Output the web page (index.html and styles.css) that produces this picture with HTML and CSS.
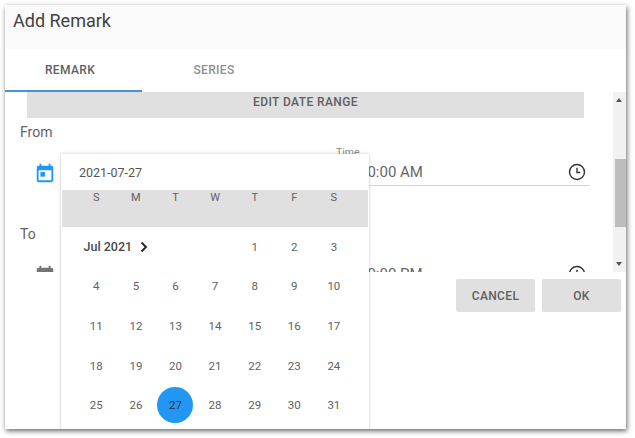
FILE: index.html
```html
<!DOCTYPE html>
<html lang="en">
  <head>
    <meta charset="UTF-8" />
    <title>Add Remark</title>
    <link rel="stylesheet" href="styles.css">
  </head>
  <body>
    <div class="dialog">
      <div class="dialog-title">Add Remark</div>

      <div class="tabs">
        <div class="tab active">REMARK</div>
        <div class="tab">SERIES</div>
      </div>

      <div class="scroll-area">
        <div class="form-content">
          <div class="range-bar">EDIT DATE RANGE</div>

          <div class="group-label">From</div>
          <div class="field-row">
            <svg class="date-icon blue" viewBox="0 0 24 24"><path d="M19 4h-1V2h-2v2H8V2H6v2H5C3.9 4 3 4.900 3 6v14c0 1.100.9 2 2 2h14c1.100 0 2-.9 2-2V6c0-1.100-.9-2-2-2zm0 16H5V9h14v11z" /><rect x="7" y="11" width="5" height="5" /></svg>
            <div class="time-field">
              <span class="time-label">Time</span>
              <span class="time-value">10:00 AM</span>
              <svg class="clock-icon" viewBox="0 0 24 24"><circle cx="12" cy="12" r="9" /><path d="M12 7v5.500h4" /></svg>
            </div>
          </div>

          <div class="group-label to">To</div>
          <div class="field-row">
            <svg class="date-icon" viewBox="0 0 24 24"><path d="M19 4h-1V2h-2v2H8V2H6v2H5C3.9 4 3 4.900 3 6v14c0 1.100.9 2 2 2h14c1.100 0 2-.9 2-2V6c0-1.100-.9-2-2-2zm0 16H5V9h14v11z" /></svg>
            <div class="time-field">
              <span class="time-value">10:00 PM</span>
              <svg class="clock-icon" viewBox="0 0 24 24"><circle cx="12" cy="12" r="9" /><path d="M12 7v5.500h4" /></svg>
            </div>
          </div>
        </div>

        <div class="scrollbar">
          <span class="arrow up"></span>
          <span class="thumb"></span>
          <span class="arrow down"></span>
        </div>
      </div>

      <div class="actions">
        <button class="btn">CANCEL</button>
        <button class="btn">OK</button>
      </div>

      <!-- Date picker popup sits over the form -->
      <div class="picker">
        <div class="picker-input">2021-07-27</div>
        <div class="weekdays">
          <span>S</span><span>M</span><span>T</span><span>W</span><span>T</span><span>F</span><span>S</span>
        </div>
        <div class="days">
          <div class="month">Jul 2021
            <svg class="chevron" viewBox="0 0 10 12"><path d="M2.500 1.500 7 6l-4.500 4.500" /></svg>
          </div>
          <span>1</span><span>2</span><span>3</span>
          <span>4</span><span>5</span><span>6</span><span>7</span><span>8</span><span>9</span><span>10</span>
          <span>11</span><span>12</span><span>13</span><span>14</span><span>15</span><span>16</span><span>17</span>
          <span>18</span><span>19</span><span>20</span><span>21</span><span>22</span><span>23</span><span>24</span>
          <span>25</span><span>26</span><span class="selected">27</span><span>28</span><span>29</span><span>30</span><span>31</span>
        </div>
      </div>
    </div>
  </body>
</html>
```

FILE: styles.css
```css
/* General Body Styles */
body {
  margin: 0;
  width: 635px;
  height: 438px;
  overflow: hidden;
  background: #fff;
  font-family: "Roboto", "Liberation Sans", sans-serif;
  color: #424242;
}

/* Dialog */
.dialog {
  position: relative;
  box-sizing: border-box;
  width: 621px;
  height: 424px;
  margin: 5px 0 0 5px;
  background: #fff;
  overflow: hidden;
}

body::after {
  content: "";
  position: absolute;
  top: 5px;
  left: 5px;
  width: 621px;
  height: 424px;
  box-shadow: 1px 2px 5px rgba(0, 0, 0, 0.6);
  pointer-events: none;
}

.dialog-title {
  height: 44px;
  padding-left: 8px;
  background: #fafafa;
  font-size: 18px;
  line-height: 31px;
  color: #424242;
}

/* Tabs */
.tabs {
  display: flex;
  height: 43px;
}

.tab {
  width: 144px;
  box-sizing: border-box;
  text-align: center;
  font-size: 12px;
  font-weight: 500;
  letter-spacing: 0.35px;
  line-height: 43px;
  color: #909090;
}

.tab.active {
  width: 137px;
  padding-right: 7px;
  color: #5f5f5f;
  border-bottom: 2px solid #4a90d9;
}

/* Scrolling form area */
.scroll-area {
  display: flex;
  height: 180px;
  overflow: hidden;
}

.form-content {
  flex: 1;
  height: 180px;
  overflow: hidden;
}

.range-bar {
  width: 557px;
  height: 26px;
  margin-left: 22px;
  background: #e0e0e0;
  text-align: center;
  font-size: 12px;
  font-weight: 500;
  letter-spacing: 0.4px;
  line-height: 20px;
  color: #5f5f5f;
}

.group-label {
  margin: 6px 0 0 15px;
  height: 16px;
  font-size: 14px;
  line-height: 16px;
  color: #616161;
}

.group-label.to {
  margin-top: 40px;
}

.field-row {
  display: flex;
  align-items: flex-end;
  height: 46px;
}

.date-icon {
  width: 22px;
  height: 22px;
  margin: 0 0 2px 29px;
  fill: #757575;
  flex: none;
}

.date-icon.blue {
  fill: #2196f3;
}

.time-field {
  display: flex;
  align-items: center;
  position: relative;
  box-sizing: border-box;
  width: 254px;
  height: 27px;
  margin-left: 280px;
  padding-right: 3px;
  border-bottom: 1px solid #d6d6d6;
}

.time-label {
  position: absolute;
  left: 0;
  top: -13px;
  font-size: 10.500px;
  color: #8a8a8a;
}

.time-value {
  flex: 1;
  margin-left: 23px;
  font-size: 15px;
  color: #666;
}

.clock-icon {
  width: 20px;
  height: 20px;
  fill: none;
  stroke: #333;
  stroke-width: 1.7;
}

/* Scrollbar */
.scrollbar {
  position: relative;
  width: 13px;
  height: 180px;
  background: #f1f1f1;
}

.thumb {
  position: absolute;
  top: 67px;
  left: 2px;
  width: 11px;
  height: 68px;
  background: #bdbdbd;
}

.arrow {
  position: absolute;
  left: 3px;
  width: 0;
  height: 0;
  border-left: 3.500px solid transparent;
  border-right: 3.500px solid transparent;
}

.arrow.up {
  top: 6px;
  border-bottom: 4px solid #555;
}

.arrow.down {
  bottom: 6px;
  border-top: 4px solid #555;
}

/* Buttons */
.actions {
  display: flex;
  justify-content: flex-end;
  gap: 7px;
  padding: 7px 5px 0 0;
}

.btn {
  width: 79px;
  height: 33px;
  padding: 0;
  border: none;
  border-radius: 2px;
  background: #e0e0e0;
  font-family: inherit;
  font-size: 12px;
  font-weight: 500;
  letter-spacing: 0.35px;
  color: #5f5f5f;
}

/* Date picker popup */
.picker {
  position: absolute;
  top: 149px;
  left: 56px;
  width: 308px;
  height: 280px;
  background: #fff;
  box-shadow: 0 0 3px rgba(0, 0, 0, 0.25);
}

.picker-input {
  height: 36px;
  padding-left: 18px;
  font-size: 12.500px;
  line-height: 37px;
  color: #555;
}

.weekdays {
  display: grid;
  grid-template-columns: repeat(7, 39.6px);
  height: 37px;
  margin: 0 1px;
  padding-left: 14.500px;
  background: #e0e0e0;
  font-size: 11px;
  line-height: 15px;
  text-align: center;
  color: #616161;
}

.days {
  display: grid;
  grid-template-columns: repeat(7, 39.6px);
  grid-auto-rows: 39.6px;
  padding-left: 15.500px;
  font-size: 11.500px;
  color: #616161;
  text-align: center;
}

.days span {
  display: flex;
  align-items: center;
  justify-content: center;
}

.month {
  grid-column: span 4;
  display: flex;
  align-items: center;
  gap: 7px;
  padding-left: 7px;
  font-size: 12.500px;
  font-weight: 500;
  color: #4a4a4a;
}

.chevron {
  width: 10px;
  height: 12px;
  fill: none;
  stroke: #222;
  stroke-width: 1.9;
}

.days .selected {
  width: 36px;
  height: 36px;
  margin: 2px auto 0;
  border-radius: 50%;
  background: #2196f3;
  color: #333;
}
```
